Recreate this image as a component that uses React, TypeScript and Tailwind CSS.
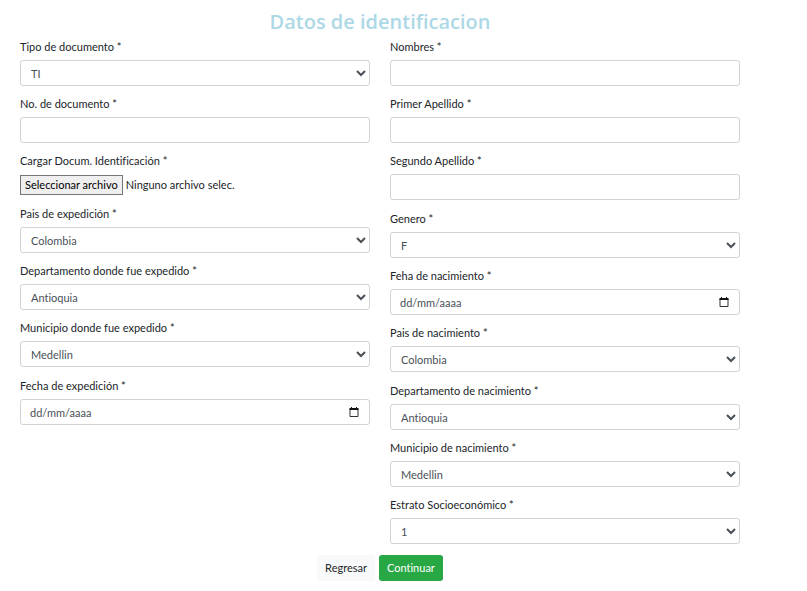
import { useId } from "react";
import type { ReactNode } from "react";

const controlClass =
  "block h-[26px] w-full rounded-[3px] border border-[#ced4da] bg-white text-[11px] text-[#495057] focus:border-[#80bdff] focus:outline-none";

function Field({ id, label, children }: { id: string; label: string; children: ReactNode }) {
  return (
    <div>
      <label htmlFor={id} className="mb-[3px] block leading-5">
        {label} *
      </label>
      {children}
    </div>
  );
}

function TextField({ label }: { label: string }) {
  const id = useId();
  return (
    <Field id={id} label={label}>
      <input id={id} type="text" className={`${controlClass} px-2`} />
    </Field>
  );
}

function SelectField({ label, options }: { label: string; options: string[] }) {
  const id = useId();
  return (
    <Field id={id} label={label}>
      <select id={id} className={`${controlClass} px-[6px]`}>
        {options.map((option) => (
          <option key={option}>{option}</option>
        ))}
      </select>
    </Field>
  );
}

function DateField({ label }: { label: string }) {
  const id = useId();
  return (
    <Field id={id} label={label}>
      <div className={`${controlClass} flex! items-center pr-[10px] pl-[9px]`}>
        <input
          id={id}
          type="text"
          placeholder="dd/mm/aaaa"
          className="h-full min-w-0 flex-1 placeholder:text-[#495057] focus:outline-none"
        />
        <button type="button" aria-label="Abrir calendario">
          <svg viewBox="0 0 10 10" className="block size-[10px]" fill="none">
            <path d="M1 2v7.5h8V2" stroke="#333" strokeWidth="1" />
            <path d="M0.5 1h9v2h-9zM2 0h1v1H2zM7 0h1v1H7z" fill="#111" />
          </svg>
        </button>
      </div>
    </Field>
  );
}

function FileField({ label }: { label: string }) {
  const id = useId();
  return (
    <Field id={id} label={label}>
      <div className="relative h-[21px] pt-px">
        <input id={id} type="file" className="peer sr-only" />
        <label htmlFor={id} className="flex items-center gap-[3px] leading-[18px]">
          <span className="border border-[#767676] bg-[#efefef] px-1 text-black">
            Seleccionar archivo
          </span>
          <span>Ninguno archivo selec.</span>
        </label>
      </div>
    </Field>
  );
}

function Group({ children }: { children: ReactNode }) {
  return <div className="flex flex-col gap-2">{children}</div>;
}

export default function App() {
  return (
    <main className="max-w-[760px] bg-white px-5 pt-[7px] pb-2 font-['Lato','Open_Sans',sans-serif] text-[11px] text-[#212529] [font-variant-ligatures:none]">
      <h1 className="text-center font-['Open_Sans','Noto_Sans',sans-serif] text-[20px] leading-[30px] font-semibold text-[#add8e6]">
        Datos de identificacion
      </h1>
      <form onSubmit={(event) => event.preventDefault()}>
        <div className="grid grid-cols-2 items-start gap-x-5">
          <div className="flex flex-col gap-[9px]">
            <Group>
              <SelectField label="Tipo de documento" options={["TI", "CC", "CE"]} />
              <TextField label="No. de documento" />
              <FileField label="Cargar Docum. Identificación" />
            </Group>
            <Group>
              <SelectField label="Pais de expedición" options={["Colombia"]} />
              <SelectField label="Departamento donde fue expedido" options={["Antioquia"]} />
              <SelectField label="Municipio donde fue expedido" options={["Medellin"]} />
            </Group>
            <Group>
              <DateField label="Fecha de expedición" />
            </Group>
          </div>
          <div className="flex flex-col gap-[9px]">
            <Group>
              <TextField label="Nombres" />
              <TextField label="Primer Apellido" />
              <TextField label="Segundo Apellido" />
            </Group>
            <Group>
              <SelectField label="Genero" options={["F", "M"]} />
              <DateField label="Feha de nacimiento" />
              <SelectField label="Pais de nacimiento" options={["Colombia"]} />
            </Group>
            <Group>
              <SelectField label="Departamento de nacimiento" options={["Antioquia"]} />
              <SelectField label="Municipio de nacimiento" options={["Medellin"]} />
              <SelectField
                label="Estrato Socioeconómico"
                options={["1", "2", "3", "4", "5", "6"]}
              />
            </Group>
          </div>
        </div>
        <div className="mt-[11px] flex justify-center gap-1">
          <button type="button" className="h-[26px] rounded-[3px] bg-[#f8f9fa] px-2">
            Regresar
          </button>
          <button type="submit" className="h-[26px] rounded-[3px] bg-[#28a745] px-2 text-white">
            Continuar
          </button>
        </div>
      </form>
    </main>
  );
}
